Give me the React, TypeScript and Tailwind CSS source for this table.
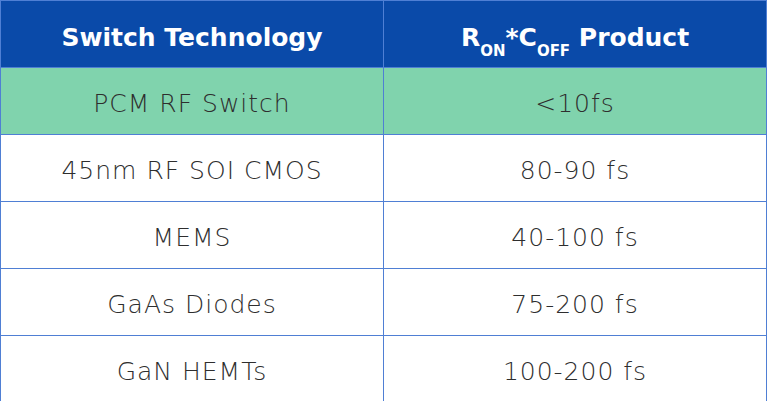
import React from 'react';

const ROWS = [
  { tech: 'PCM RF Switch', value: '<10fs', highlight: true },
  { tech: '45nm RF SOI CMOS', value: '80-90 fs' },
  { tech: 'MEMS', value: '40-100 fs' },
  { tech: 'GaAs Diodes', value: '75-200 fs' },
  { tech: 'GaN HEMTs', value: '100-200 fs' },
];

export default function App() {
  return (
    <div className="w-[768px] h-[401px] bg-white" style={{ fontFamily: '"DejaVu Sans", sans-serif' }}>
      <table className="w-[767px] h-[401px] border-collapse table-fixed">
        <thead>
          <tr className="h-[67px] bg-[#0a4aa9]">
            <th className="border border-[#4f7fd4] text-white text-[25px] font-bold pt-[7px]">
              Switch Technology
            </th>
            <th className="border border-[#4f7fd4] text-white text-[25px] font-bold pt-[7px]">
              R<sub className="text-[15px] align-[-6px]">ON</sub>*C
              <sub className="text-[15px] align-[-6px]">OFF</sub> Product
            </th>
          </tr>
        </thead>
        <tbody>
          {ROWS.map((row) => (
            <tr key={row.tech} className={`h-[67px] ${row.highlight ? 'bg-[#80d3ad]' : 'bg-white'}`}>
              <td className="border border-[#4f7fd4] text-center text-[25px] text-[#2e2e2e] font-light tracking-[1px] pt-[6px]">
                {row.tech}
              </td>
              <td className="border border-[#4f7fd4] text-center text-[25px] text-[#2e2e2e] font-light tracking-[1px] pt-[6px]">
                {row.value}
              </td>
            </tr>
          ))}
        </tbody>
      </table>
    </div>
  );
}
